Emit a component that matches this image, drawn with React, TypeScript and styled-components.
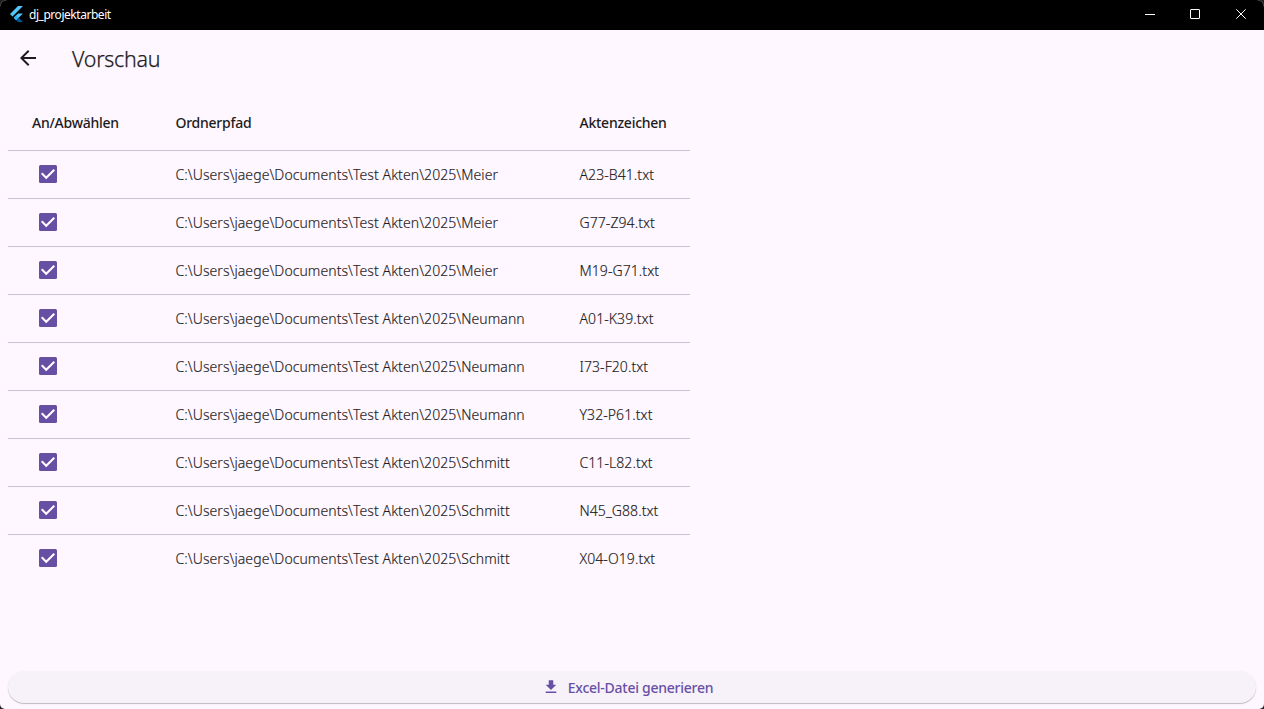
import React from 'react';
import styled, { createGlobalStyle } from 'styled-components';

const Global = createGlobalStyle`
  * { box-sizing: border-box; }
  body { margin: 0; background: #222; font-family: "Noto Sans", "Open Sans", sans-serif; color: #1d1b20; }
`;
const Window = styled.div`
  height: 709px; width: 1264px; display: flex; flex-direction: column; overflow: hidden;
  background: #fef7ff; border-radius: 7px 7px 5px 5px;
`;
const TitleBar = styled.header`
  height: 30px; flex: none; background: #000; color: #fff;
  display: flex; align-items: center; padding-left: 9.5px;
`;
const Logo = styled.svg`width: 13px; height: 16px; margin: 0 6.5px 2px 0;`;
const AppName = styled.span`font-size: 12px; line-height: 16px; letter-spacing: -0.46px; white-space: nowrap;`;
const Controls = styled.div`margin-left: auto; display: flex; align-self: flex-start;`;
const Control = styled.button<{ $w?: number }>`
  width: ${p => p.$w ?? 46}px; height: 28px; border: 0; padding: 0; background: none;
  display: grid; place-items: center;
`;
const AppBar = styled.div`height: 56px; flex: none; display: flex; align-items: center; padding-left: 16px;`;
const Back = styled.button`width: 24px; height: 24px; border: 0; padding: 0; background: none; margin-right: 32px;`;
const Title = styled.h1`
  margin: 0; padding-top: 2px; font-size: 21.4px; line-height: 28px; font-weight: 300; letter-spacing: -0.25px;
  -webkit-text-stroke: 0.25px #1d1b20;
`;
const Table = styled.div`width: 682px; margin: 9px 0 0 8px; flex: 1;`;
const Row = styled.div<{ $head?: boolean }>`
  display: grid; grid-template-columns: 143.5px 404px 1fr; align-items: center; padding-left: 24px;
  height: ${p => (p.$head ? 55 : 48)}px; border-top: ${p => (p.$head ? 0 : 1)}px solid #cac4d0;
  font-size: 14px; line-height: 20px; white-space: nowrap;
  font-weight: ${p => (p.$head ? 500 : 300)};
  letter-spacing: ${p => (p.$head ? -0.25 : 0.07)}px;
  -webkit-text-stroke: ${p => (p.$head ? 0 : 0.15)}px #1d1b20;
`;
const Cell = styled.span`padding-top: 1px;`;
const Box = styled.svg`width: 18px; height: 18px; margin: 0 0 2px 7px; display: block;`;
const Footer = styled.footer`padding: 0 8px 6px; flex: none;`;
const Generate = styled.button`
  width: 100%; height: 32px; border: 0; border-radius: 16px; background: #f7f2fa;
  box-shadow: 0 1px 1px rgba(0, 0, 0, 0.25); color: #6750a4;
  font: 500 14px/20px "Noto Sans", sans-serif; letter-spacing: -0.26px;
  display: flex; align-items: center; justify-content: center; gap: 8px; padding: 0 9px 0 0;
`;
const DownloadIcon = styled.svg`width: 18px; height: 18px;`;
const ButtonLabel = styled.span`padding-top: 2px;`;

const base = 'C:\\Users\\jaege\\Documents\\Test Akten\\2025\\';
const rows: [string, string][] = [
  ['Meier', 'A23-B41.txt'], ['Meier', 'G77-Z94.txt'], ['Meier', 'M19-G71.txt'],
  ['Neumann', 'A01-K39.txt'], ['Neumann', 'I73-F20.txt'], ['Neumann', 'Y32-P61.txt'],
  ['Schmitt', 'C11-L82.txt'], ['Schmitt', 'N45_G88.txt'], ['Schmitt', 'X04-O19.txt'],
];

export default function App() {
  return (
    <Window>
      <Global />
      <TitleBar>
        <Logo viewBox="2.3 0 19.4 24">
          <path d="M14.3 0L2.3 12 6 15.7 21.7 0z" fill="#54c5f8" />
          <path d="M14.33 11.07L7.86 17.53l3.7 3.7 10.14-10.16z" fill="#54c5f8" />
          <path d="M11.56 13.84l-3.7 3.69 3.7 3.7 3.68-3.7z" fill="#29b6f6" />
          <path d="M11.56 21.23L14.33 24h7.37l-6.46-6.47z" fill="#01579b" />
        </Logo>
        <AppName>dj_projektarbeit</AppName>
        <Controls>
          <Control $w={44}><svg width="10" height="10"><path d="M0 5.5h10" stroke="#fff" /></svg></Control>
          <Control><svg width="10" height="10"><rect x=".5" y=".5" width="9" height="9" rx=".5" fill="none" stroke="#fff" /></svg></Control>
          <Control><svg width="10" height="10"><path d="M.3.3l9.4 9.4m0-9.4L.3 9.7" stroke="#fff" /></svg></Control>
        </Controls>
      </TitleBar>
      <AppBar>
        <Back><svg width="24" height="24" viewBox="0 0 24 24"><path fill="#1d1b20" d="M20 11H7.83l5.59-5.59L12 4l-8 8 8 8 1.41-1.41L7.83 13H20z" /></svg></Back>
        <Title>Vorschau</Title>
      </AppBar>
      <Table>
        <Row $head><Cell>An/Abwählen</Cell><Cell>Ordnerpfad</Cell><Cell>Aktenzeichen</Cell></Row>
        {rows.map(([n, f]) => (
          <Row key={f}>
            <Box viewBox="0 0 18 18"><rect width="18" height="18" rx="1.5" fill="#6750a4" /><path d="M2.7 8.3l4.5 4.5 8.1-8.1" fill="none" stroke="#fff" strokeWidth="2" /></Box>
            <Cell>{base + n}</Cell><Cell>{f}</Cell>
          </Row>
        ))}
      </Table>
      <Footer>
        <Generate>
          <DownloadIcon viewBox="0 0 24 24"><path fill="#6750a4" d="M19 9h-4V3H9v6H5l7 7 7-7zM5 18v2h14v-2H5z" /></DownloadIcon>
          <ButtonLabel>Excel-Datei generieren</ButtonLabel>
        </Generate>
      </Footer>
    </Window>
  );
}
